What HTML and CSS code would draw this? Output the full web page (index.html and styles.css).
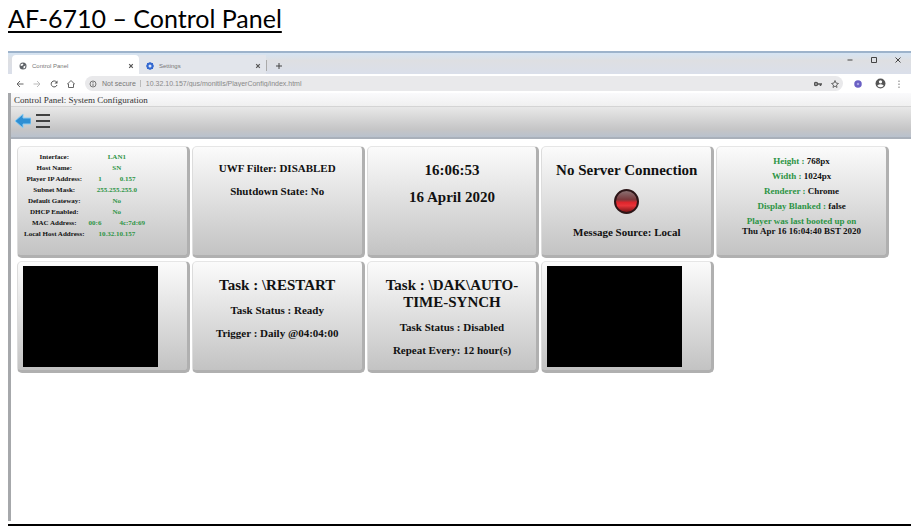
FILE: index.html
```html
<!DOCTYPE html>
<html lang="en">
<head>
  <meta charset="UTF-8" />
  <meta name="viewport" content="width=device-width, initial-scale=1" />
  <title>AF-6710 – Control Panel</title>
  <link rel="stylesheet" href="styles.css">
</head>
<body>
  <h1>AF-6710 – Control Panel</h1>

  <div class="window">
    <div class="tab-strip">
      <div class="tab active">
        <svg class="icon" viewBox="0 0 16 16"><circle cx="8" cy="8" r="7" fill="#5f6368"/><path d="M3 5l4-2 2 2-3 3-3-1zM9 9l4-2-1 5-3 1z" fill="#fff"/></svg>
        <span class="tab-title">Control Panel</span>
        <button class="tab-close" aria-label="Close tab"><svg class="icon-sm" viewBox="0 0 10 10"><path d="M2 2l6 6M8 2l-6 6" stroke="#555" stroke-width="2"/></svg></button>
      </div>
      <div class="tab">
        <svg class="icon" viewBox="0 0 16 16"><circle cx="8" cy="8" r="5" fill="#dbe6fa" stroke="#3469d0" stroke-width="4"/><path d="M8 0v3M8 13v3M0 8h3M13 8h3M2 2l3 3M11 11l3 3M14 2l-3 3M5 11l-3 3" stroke="#3469d0" stroke-width="2"/></svg>
        <span class="tab-title">Settings</span>
        <button class="tab-close" aria-label="Close tab"><svg class="icon-sm" viewBox="0 0 10 10"><path d="M2 2l6 6M8 2l-6 6" stroke="#555" stroke-width="2"/></svg></button>
      </div>
      <button class="new-tab" aria-label="New tab"><svg class="icon" viewBox="0 0 16 16"><path d="M8 2v12M2 8h12" stroke="#444" stroke-width="2"/></svg></button>
      <div class="window-buttons">
        <button aria-label="Minimise"><svg class="icon" viewBox="0 0 16 16"><path d="M3 8h10" stroke="#444" stroke-width="2"/></svg></button>
        <button aria-label="Maximise"><svg class="icon" viewBox="0 0 16 16"><path d="M3 3h10v10H3z" fill="none" stroke="#444" stroke-width="2"/></svg></button>
        <button aria-label="Close"><svg class="icon" viewBox="0 0 16 16"><path d="M3 3l10 10M13 3L3 13" stroke="#444" stroke-width="2"/></svg></button>
      </div>
    </div>

    <div class="toolbar">
      <button aria-label="Back"><svg class="icon" viewBox="0 0 16 16"><path d="M15 8H2M8 2L2 8l6 6" fill="none" stroke="#666" stroke-width="2"/></svg></button>
      <button aria-label="Forward"><svg class="icon" viewBox="0 0 16 16"><path d="M1 8h13M8 2l6 6-6 6" fill="none" stroke="#bbb" stroke-width="2"/></svg></button>
      <button aria-label="Reload"><svg class="icon" viewBox="0 0 16 16"><path d="M13 4a6 6 0 1 0 1 6" fill="none" stroke="#555" stroke-width="2"/><path d="M15 1v6H9z" fill="#555"/></svg></button>
      <button aria-label="Home"><svg class="icon" viewBox="0 0 16 16"><path d="M1 8l7-7 7 7h-2v7H3V8z" fill="none" stroke="#666" stroke-width="2"/></svg></button>
      <div class="address-bar">
        <svg class="icon" viewBox="0 0 16 16"><circle cx="8" cy="8" r="6" fill="none" stroke="#777" stroke-width="2"/><path d="M8 7v5M8 4v2" stroke="#777" stroke-width="2"/></svg>
        <label class="secure" for="address">Not secure</label>
        <input id="address" type="text" value="10.32.10.157/gus/monitils/PlayerConfig/index.html">
        <button aria-label="Saved passwords"><svg class="icon" viewBox="0 0 16 16"><circle cx="4" cy="8" r="3" fill="none" stroke="#555" stroke-width="3"/><path d="M7 8h9M13 8v4" stroke="#555" stroke-width="3"/></svg></button>
        <button aria-label="Bookmark"><svg class="icon" viewBox="0 0 16 16"><path d="M8 1l2 5 5 1-4 3 1 5-4-3-4 3 1-5-4-3 5-1z" fill="none" stroke="#666" stroke-width="2"/></svg></button>
      </div>
      <button class="extension" aria-label="Extension"><svg class="icon" viewBox="0 0 16 16"><circle cx="8" cy="8" r="5" fill="#aaa5e4" stroke="#6a60c4" stroke-width="5"/></svg></button>
      <button class="profile" aria-label="Profile"><svg class="icon-lg" viewBox="0 0 20 20"><circle cx="10" cy="10" r="9" fill="#555"/><circle cx="10" cy="7" r="3" fill="#fff"/><path d="M4 14q6-5 12 0q-6 6-12 0z" fill="#fff"/></svg></button>
      <button aria-label="Menu"><svg class="icon" viewBox="0 0 16 16"><path d="M7 1h2v3H7zM7 7h2v3H7zM7 13h2v3H7z" fill="#777"/></svg></button>
    </div>

    <div class="page">
      <div class="page-title">Control Panel: System Configuration</div>
      <div class="page-nav">
        <button aria-label="Go back"><svg class="nav-icon" viewBox="0 0 16 16"><path d="M0 8l8-7v4h8v6H8v4z" fill="#2f8fd3" stroke="#8cccf2" stroke-width="1"/></svg></button>
        <button aria-label="Open menu"><svg class="nav-icon" viewBox="0 0 16 16"><path d="M1 2h14M1 8h14M1 14h14" stroke="#404040" stroke-width="2"/></svg></button>
      </div>

      <div class="cards">
        <div class="card network">
          <table>
            <tr><th scope="row">Interface:</th><td>LAN1</td></tr>
            <tr><th scope="row">Host Name:</th><td>SN</td></tr>
            <tr><th scope="row">Player IP Address:</th><td><span class="split"><span>1</span><span>0.157</span></span></td></tr>
            <tr><th scope="row">Subnet Mask:</th><td>255.255.255.0</td></tr>
            <tr><th scope="row">Default Gateway:</th><td>No</td></tr>
            <tr><th scope="row">DHCP Enabled:</th><td>No</td></tr>
            <tr><th scope="row">MAC Address:</th><td><span class="split"><span>00:6</span><span>4c:7d:69</span></span></td></tr>
            <tr><th scope="row">Local Host Address:</th><td>10.32.10.157</td></tr>
          </table>
        </div>
        <div class="card">
          <p>UWF Filter: DISABLED</p>
          <p>Shutdown State: No</p>
        </div>
        <div class="card">
          <h2>16:06:53</h2>
          <h2>16 April 2020</h2>
        </div>
        <div class="card">
          <h2>No Server Connection</h2>
          <div class="led"></div>
          <p>Message Source: Local</p>
        </div>
        <div class="card display">
          <p><span class="green">Height :</span> 768px</p>
          <p><span class="green">Width :</span> 1024px</p>
          <p><span class="green">Renderer :</span> Chrome</p>
          <p><span class="green">Display Blanked :</span> false</p>
          <p><span class="green">Player was last booted up on</span><br>Thu Apr 16 16:04:40 BST 2020</p>
        </div>
        <div class="card preview"><div class="screen"></div></div>
        <div class="card">
          <h2>Task : \RESTART</h2>
          <p>Task Status : Ready</p>
          <p>Trigger : Daily @04:04:00</p>
        </div>
        <div class="card">
          <h2>Task : \DAK\AUTO-<wbr>TIME-SYNCH</h2>
          <p>Task Status : Disabled</p>
          <p>Repeat Every: 12 hour(s)</p>
        </div>
        <div class="card preview"><div class="screen"></div></div>
      </div>
    </div>
  </div>
</body>
</html>
```
FILE: styles.css
```css
* {
  box-sizing: border-box;
}
body {
  margin: 0;
  padding: 0 5px 4px 8px;
  min-height: 100vh;
  display: flex;
  flex-direction: column;
  background: #fff;
  color: #111;
  font-family: "Liberation Serif", serif;
}
h1 {
  margin: 0;
  height: 51px;
  padding-top: 2px;
  font-family: Lato, sans-serif;
  font-size: 25px;
  font-weight: 400;
  line-height: 32px;
  color: #000;
  text-decoration: underline;
  text-decoration-thickness: 2px;
  text-underline-offset: 3px;
  text-decoration-skip-ink: none;
}
button {
  display: flex;
  align-items: center;
  justify-content: center;
  padding: 0;
  border: none;
  background: none;
  cursor: pointer;
}
svg {
  display: block;
}
.icon {
  width: 8px;
  height: 8px;
  flex: none;
}
.icon-sm {
  width: 6px;
  height: 6px;
}
.icon-lg {
  width: 11px;
  height: 11px;
}

/* browser chrome */
.window {
  flex: 1;
  display: flex;
  flex-direction: column;
  padding-bottom: 3px;
  border-top: 2px solid #9db3cb;
  border-bottom: 2px solid #000;
  font-family: "Liberation Sans", sans-serif;
}
.tab-strip {
  display: flex;
  height: 21px;
  padding-left: 4px;
  background: linear-gradient(#d5e4f3, #dedfe2 35%, #dadfea);
}
.tab {
  display: flex;
  align-items: center;
  width: 127px;
  margin-top: 2px;
  padding: 3px 5px 0 7px;
  gap: 5px;
  background: #e2e5eb;
  color: #777;
  font-size: 6px;
}
.tab.active {
  background: #fff;
  border-radius: 4px 4px 0 0;
}
.tab-title {
  flex: 1;
}
.new-tab {
  height: 11px;
  margin-top: 7px;
  padding: 0 8px;
  border-left: 1px solid #aaa;
}
.window-buttons {
  display: flex;
  gap: 16px;
  height: 14px;
  margin-left: auto;
  padding-right: 9px;
}
.toolbar {
  display: flex;
  align-items: center;
  gap: 9px;
  height: 19px;
  padding: 0 8px;
  background: #fff;
}
.address-bar {
  flex: 1;
  display: flex;
  align-items: center;
  gap: 5px;
  height: 15px;
  margin-left: 1px;
  padding: 0 4px;
  border-radius: 8px;
  background: #e9e9eb;
  color: #777;
  font-size: 7px;
}
.address-bar button {
  margin-left: 4px;
}
.secure {
  padding-right: 4px;
  border-right: 1px solid #bbb;
}
.address-bar input {
  flex: 1;
  min-width: 0;
  padding: 0;
  border: none;
  background: none;
  color: #888;
  font: inherit;
  outline: none;
}
.extension {
  margin-left: 2px;
}
.profile {
  margin-left: 4px;
}

/* control panel page */
.page {
  flex: 1;
  border-left: 3px solid #a6a8ab;
  font-family: "Liberation Serif", serif;
}
.page-title {
  height: 14px;
  padding-left: 3px;
  background: linear-gradient(#fafafc, #f0f0f0);
  border-bottom: 1px solid #d4d4d4;
  color: #333;
  font-size: 9px;
  line-height: 15px;
}
.page-nav {
  display: flex;
  align-items: center;
  gap: 4px;
  height: 32px;
  padding: 0 4px 2px;
  background: linear-gradient(#e8e8e8, #c5c5c6 75%, #b9c1cd);
  border-bottom: 2px solid #a9b0ba;
}
.nav-icon {
  width: 16px;
  height: 16px;
}
.cards {
  display: grid;
  grid-template-columns: repeat(5, 1fr);
  gap: 3px 2px;
  padding: 7px 22px 0 6px;
}
.card {
  min-height: 112px;
  padding: 15px 8px 8px;
  border-right: 3px solid #b0b0b0;
  border-bottom: 3px solid #b0b0b0;
  border-top: 1px solid #e6e6e6;
  border-left: 1px solid #dcdcdc;
  border-radius: 5px;
  background: linear-gradient(#fbfbfb, #c3c3c3);
  font-weight: bold;
  text-align: center;
}
.card h2 {
  margin: 0 0 10px;
  font-size: 15px;
  line-height: 17px;
}
.card p {
  margin: 0 0 10px;
  font-size: 11px;
  line-height: 13px;
}
.card p:last-child {
  margin-bottom: 0;
}
.network {
  padding: 5px 0 0 4px;
}
.network table {
  border-collapse: collapse;
  font-size: 7px;
  line-height: 11px;
}
.network th,
.network td {
  padding: 0 2px;
  text-align: center;
}
.network td {
  min-width: 60px;
  color: #2d9445;
}
.split {
  display: flex;
  justify-content: center;
  gap: 18px;
}
.card.display {
  padding-top: 9px;
}
.card.display p {
  margin-bottom: 5px;
  font-size: 9px;
  line-height: 10px;
}
.green {
  color: #2d9445;
}
.led {
  width: 25px;
  height: 25px;
  margin: 0 auto 12px;
  border: 2px solid #2c1517;
  border-radius: 50%;
  background: linear-gradient(#8a7072, #7a3a3d 40%, #e0252c 55%, #e8343a 70%, #7c1518);
}
.card.preview {
  padding: 4px 5px 3px;
}
.screen {
  width: 85%;
  height: 101px;
  background: #000;
}
```
